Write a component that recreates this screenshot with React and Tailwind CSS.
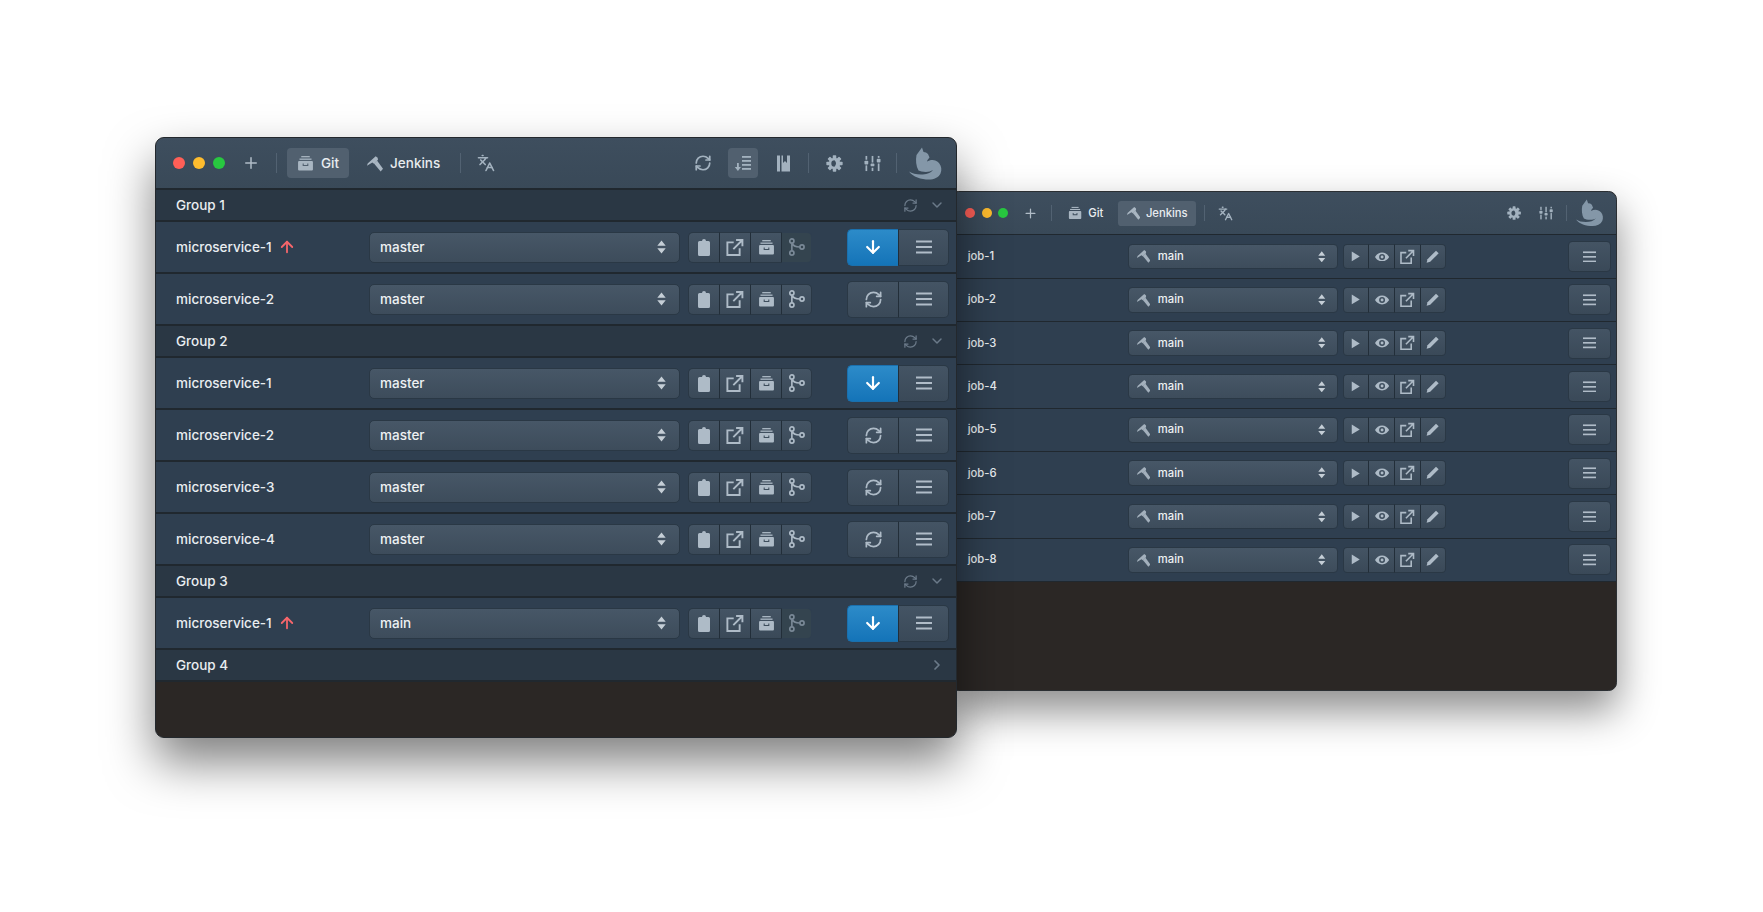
import { Languages, RefreshCw, Plus, ChevronDown, ChevronRight, ArrowUp, ArrowDown } from 'lucide-react';

const ArchiveIcon = ({ className = 'w-[17px] h-[17px]' }) => (
    <svg viewBox="0 0 24 24" className={className} fill="currentColor">
        <rect x="6" y="1.5" width="12" height="1.8" />
        <rect x="3.5" y="5" width="17" height="1.8" />
        <path fillRule="evenodd" d="M3 8.5h18a1.5 1.5 0 0 1 1.5 1.5v10.500a1.5 1.5 0 0 1-1.5 1.500H3a1.500 1.500 0 0 1-1.500-1.500V10A1.500 1.500 0 0 1 3 8.500zM8 12v3.500h8V12h-1.500v2h-5v-2z" />
    </svg>
);

const HammerIcon = ({ className = 'w-[16px] h-[17px]' }) => (
    <svg viewBox="0 0 24 24" className={className} fill="currentColor">
        <path d="M13 1 L1 12 L0 15.500 L8 10.500 L10.500 12.500 L16.500 6.500 L16 3.500 Z" />
        <path d="M10.500 12 L15 7.500 L24 20 L20.500 24 Z" />
    </svg>
);

const SortIcon = () => (
    <svg viewBox="0 0 18 18" className="w-[18px] h-[18px]" fill="currentColor">
        <rect x="8" y="2" width="9" height="1.800" />
        <rect x="8" y="6" width="9" height="1.800" />
        <rect x="8" y="10" width="9" height="1.800" />
        <rect x="8" y="14" width="9" height="1.800" />
        <rect x="3" y="9" width="1.800" height="6" />
        <path d="M0.800 13 H7 L3.900 17 Z" />
    </svg>
);

const BookIcon = () => (
    <svg viewBox="0 0 13 17" className="w-[13px] h-[17px]" fill="currentColor">
        <rect x="0" y="0.500" width="3" height="16" />
        <path d="M4.500 0.500 H6 V8 L8 6 L10 8 V0.500 H13 V16.500 H4.500 Z" />
    </svg>
);

const GearIcon = ({ bg = '#3c4c5b' }) => (
    <svg viewBox="0 0 24 24" className="w-[17px] h-[17px]" fill="currentColor">
        <circle cx="12" cy="12" r="8" />
        {[0, 45, 90, 135].map((a) => (
            <rect key={a} x="9.500" y="0.500" width="5" height="23" rx="1" transform={`rotate(${a} 12 12)`} />
        ))}
        <path d="M12 7.500 A4.500 4.500 0 0 0 12 16.500 A6.500 6.500 0 0 0 12 7.500 Z" fill={bg} />
    </svg>
);

const SlidersIcon = () => (
    <svg viewBox="0 0 18 18" className="w-[17px] h-[17px]" fill="currentColor">
        <rect x="1.600" y="1" width="1.800" height="4" />
        <rect x="0.500" y="6" width="4" height="4" rx="1" />
        <rect x="1.600" y="11" width="1.800" height="6" />
        <rect x="8.100" y="1" width="1.800" height="7" />
        <rect x="7" y="9" width="4" height="3" rx="1" />
        <rect x="8.100" y="13.500" width="1.800" height="3.500" />
        <rect x="14.600" y="1" width="1.800" height="2" />
        <rect x="13.500" y="4" width="4" height="4" rx="1" />
        <rect x="14.600" y="9" width="1.800" height="8" />
    </svg>
);

// the cat sits up with its head at the top and its tail sweeping under the body
const CatIcon = () => (
    <svg viewBox="0 0 33 33" className="w-[33px] h-[33px] text-[#8497a8]" fill="currentColor">
        <path d="M13 0.500 L14.500 5 L17 5.500 L19 7 L20.500 10.500 L18.500 13 L18 14.500 C22 12 27 12.500 30 16 C32.500 19 33 23 31.500 26.500 C29.500 30.500 25 32.500 20 32.500 C12 32.500 4 30 0 24.500 C3 26.500 7 27.500 12 27.500 C17 27.500 21 26.500 24 23 C21 25 17 25.500 12.500 24.500 L9.500 23.500 C7 19 6.500 13 7.500 8 Z" />
    </svg>
);

const ClipboardIcon = () => (
    <svg viewBox="0 0 12 17" className="w-[12px] h-[17px]" fill="currentColor">
        <path d="M4 2 A2 2 0 0 1 8 2 H10.500 A1.500 1.500 0 0 1 12 3.500 V15.500 A1.500 1.500 0 0 1 10.500 17 H1.500 A1.500 1.500 0 0 1 0 15.500 V3.500 A1.500 1.500 0 0 1 1.500 2 Z" />
    </svg>
);

const ExternalIcon = () => (
    <svg viewBox="0 0 24 24" className="w-[19px] h-[19px] -ml-[1px]" fill="none" stroke="currentColor" strokeWidth="2.400">
        <path d="M11 5.500 H3 V21.500 H18.500 V13" />
        <path d="M10.500 14 L21 3.500 M14 2.500 H22 V10.500" />
    </svg>
);

const BranchIcon = () => (
    <svg viewBox="0 0 24 24" className="w-[18px] h-[18px] -ml-[2px]" fill="none" stroke="currentColor" strokeWidth="2.200">
        <circle cx="6.500" cy="4" r="2.800" />
        <circle cx="6.500" cy="20" r="2.800" />
        <circle cx="20" cy="12" r="2.800" />
        <path d="M6.500 7 V17 M7 7 C8 11 12 12 17 12" />
    </svg>
);

const MenuIcon = () => (
    <svg viewBox="0 0 16 14" className="w-[16px] h-[14px]" fill="#b0bcc8">
        <rect x="0" y="0.500" width="16" height="2" />
        <rect x="0" y="6" width="16" height="2" />
        <rect x="0" y="11.500" width="16" height="2" />
    </svg>
);

const PlayIcon = () => (
    <svg viewBox="0 0 12 14" className="w-[11px] h-[13px]" fill="currentColor">
        <path d="M1 0.500 L11.500 7 L1 13.500 Z" />
    </svg>
);

const EyeIcon = () => (
    <svg viewBox="0 0 24 16" className="w-[17px] h-[12px]" fill="currentColor">
        <path fillRule="evenodd" d="M12 0.500 C17.500 0.500 21.500 4 24 8 C21.500 12 17.500 15.500 12 15.500 C6.500 15.500 2.500 12 0 8 C2.500 4 6.500 0.500 12 0.500 Z M12 3 A5 5 0 1 0 12 13 A5 5 0 0 0 12 3 Z M12 5.500 A2.500 2.500 0 1 1 12 10.500 A2.500 2.500 0 0 1 12 5.500 Z" />
    </svg>
);

const PencilIcon = () => (
    <svg viewBox="0 0 16 16" className="w-[16px] h-[16px]" fill="currentColor">
        <path d="M12 0.800 L15.200 4 L5 14.200 L0.800 15.200 L1.800 11 Z" />
    </svg>
);

const UpDownIcon = () => (
    <svg viewBox="0 0 10 16" className="w-[9px] h-[14px] text-[#c5ced6]" fill="currentColor">
        <path d="M5 0.500 L9.800 6.500 H0.200 Z M5 15.500 L0.200 9.500 H9.800 Z" />
    </svg>
);

const Separator = ({ className = '' }) => <div className={`w-px h-[20px] bg-[#526272] ${className}`}></div>;

const TitleTab = ({ active, icon, label, className = '' }) => (
    <div className={`flex items-center gap-[7px] h-[30px] px-[10px] rounded-[4px] text-[13.5px] font-[450] text-[#e8ecef] ${active ? 'bg-[#51606f]' : ''} ${className}`}>
        <span className="text-[#a9b6c2]">{icon}</span>
        <span>{label}</span>
    </div>
);

const TitleCell = ({ children, active, className = '' }) => (
    <div className={`flex items-center justify-center w-[30px] h-[30px] rounded-[4px] text-[#a3b2bf] ${active ? 'bg-[#51606f]' : ''} ${className}`}>
        {children}
    </div>
);

const TitleBar = ({ tab, compact }) => (
    <div className="flex items-center h-[52px] pl-[17px] pr-[14px] border-b-2 border-[#20282f] bg-gradient-to-b from-[#3e4e5e] to-[#394958] shrink-0">
        <div className="flex gap-[8px]">
            <div className="w-[12px] h-[12px] rounded-full bg-[#ff5f57]"></div>
            <div className="w-[12px] h-[12px] rounded-full bg-[#febc2e]"></div>
            <div className="w-[12px] h-[12px] rounded-full bg-[#28c840]"></div>
        </div>
        <Plus className="w-[18px] h-[18px] ml-[17px] text-[#b0bcc7]" />
        <Separator className="ml-[16px]" />
        <TitleTab className="ml-[10px]" active={tab === 'git'} icon={<ArchiveIcon />} label="Git" />
        <TitleTab className="ml-[8px]" active={tab === 'jenkins'} icon={<HammerIcon />} label="Jenkins" />
        <Separator className="ml-[10px]" />
        <Languages className="w-[18px] h-[18px] ml-[16px] text-[#a3b2bf]" strokeWidth={2.2} />
        <div className="flex items-center ml-auto">
            {!compact && (
                <>
                    <TitleCell><RefreshCw className="w-[18px] h-[18px]" strokeWidth={2.300} /></TitleCell>
                    <TitleCell className="ml-[10px]" active><SortIcon /></TitleCell>
                    <TitleCell className="ml-[10px]"><BookIcon /></TitleCell>
                    <Separator className="ml-[10px]" />
                </>
            )}
            <TitleCell className="ml-[10px]"><GearIcon /></TitleCell>
            <TitleCell className="ml-[8px]"><SlidersIcon /></TitleCell>
            <Separator className="ml-[9px]" />
            <div className="ml-[12px]"><CatIcon /></div>
        </div>
    </div>
);

const Select = ({ value, hammer, className = '' }) => (
    <div className={`flex items-center justify-between h-[31px] pl-[10px] pr-[13px] rounded-[5px] border border-[#2a3845] bg-gradient-to-b from-[#475767] to-[#3d4c5b] text-[13.5px] font-[450] text-[#eef1f3] ${className}`}>
        <div className="flex items-center gap-[9px]">
            {hammer && <span className="text-[#a3b0bc]"><HammerIcon /></span>}
            <span>{value}</span>
        </div>
        <UpDownIcon />
    </div>
);

const ToolButtons = ({ children, dimLast }) => {
    const items = children;
    return (
        <div className="flex h-[31px] rounded-[5px] text-[#aebbc7]">
            {items.map((item, i) => {
                const last = i === items.length - 1;
                const dim = last && dimLast;
                return (
                    <div
                        key={i}
                        className={`flex items-center justify-center w-[31px] border-y border-[#2a3845] ${i === 0 ? 'rounded-l-[5px] border-l' : 'border-l border-l-[#222e39]'} ${last ? 'rounded-r-[5px] border-r' : ''} ${dim ? 'bg-[#34444f] !border-[#2f3f50] !border-l-[#222e39] text-[#7a8997]' : 'bg-gradient-to-b from-[#445464] to-[#3a4958]'}`}
                    >
                        {item}
                    </div>
                );
            })}
        </div>
    );
};

const ActionButtons = ({ primary, hideAction }) => (
    <div className="flex h-[37px] ml-auto">
        {!hideAction && (
            <div className={`flex items-center justify-center w-[51px] rounded-l-[5px] border border-r-0 ${primary ? 'border-[#1a70ae] bg-gradient-to-b from-[#2c8bc9] to-[#1474b8] text-white' : 'border-[#2a3845] bg-gradient-to-b from-[#445464] to-[#3a4958] text-[#aebbc7]'}`}>
                {primary ? <ArrowDown className="w-[20px] h-[20px]" strokeWidth={2.600} /> : <RefreshCw className="w-[19px] h-[19px]" strokeWidth={2.200} />}
            </div>
        )}
        <div className={`flex items-center justify-center w-[51px] border border-[#2a3845] bg-gradient-to-b from-[#445464] to-[#3a4958] ${hideAction ? 'rounded-[5px]' : 'rounded-r-[5px] border-l-[#222e39]'}`}>
            <MenuIcon />
        </div>
    </div>
);

const ServiceRow = ({ name, branch = 'master', ahead, primary, branchDisabled }) => (
    <div className="flex items-center h-[52px] pl-[20px] pr-[7px] border-b-2 border-[#20282f] bg-[#2f3f50]">
        <div className="flex items-center gap-[6px] w-[193px] text-[13.5px] font-[450] text-[#e9edf0]">
            <span>{name}</span>
            {ahead && <ArrowUp className="w-[18px] h-[18px] text-[#f7666b]" strokeWidth={2.400} />}
        </div>
        <Select className="w-[311px] mr-[8px]" value={branch} />
        <ToolButtons dimLast={branchDisabled}>
            {[<ClipboardIcon />, <ExternalIcon />, <ArchiveIcon />, <BranchIcon />]}
        </ToolButtons>
        <ActionButtons primary={primary} />
    </div>
);

const JobRow = ({ name }) => (
    <div className="flex items-center h-[52px] pl-[20px] pr-[6px] border-b-2 border-[#20282f] bg-[#2f3f50]">
        <div className="w-[192px] text-[13.5px] font-[450] text-[#e9edf0]">{name}</div>
        <Select className="w-[252px] mr-[6px]" value="main" hammer />
        <ToolButtons>
            {[<PlayIcon />, <EyeIcon />, <ExternalIcon />, <PencilIcon />]}
        </ToolButtons>
        <ActionButtons hideAction />
    </div>
);

const GroupHeader = ({ name, open = true }) => (
    <div className="flex items-center h-[32px] pl-[20px] pr-[11px] border-b-2 border-[#20282f] bg-[#2a3744] text-[13.5px] font-[450] text-[#e9edf0]">
        <span>{name}</span>
        <div className="flex items-center ml-auto text-[#6b7a89]">
            {open ? (
                <>
                    <RefreshCw className="w-[15px] h-[15px] mr-[11px]" strokeWidth={2} />
                    <ChevronDown className="w-[16px] h-[16px]" strokeWidth={2.200} />
                </>
            ) : (
                <ChevronRight className="w-[16px] h-[16px]" strokeWidth={2.600} />
            )}
        </div>
    </div>
);

const jobs = ['job-1', 'job-2', 'job-3', 'job-4', 'job-5', 'job-6', 'job-7', 'job-8'];

const App = () => {
    return (
        <div className="relative w-[1763px] h-[912px] overflow-hidden bg-white font-['Inter','Liberation_Sans',sans-serif]">
            {/* Jenkins window, drawn at a smaller scale behind the Git one */}
            <div className="absolute left-[950px] top-[191px]">
                <div className="[zoom:0.8333]">
                    <div className="flex flex-col w-[800px] h-[600px] rounded-[10px] overflow-hidden border border-[#2b2f33] bg-[#2b2725] shadow-[0_24px_48px_rgba(0,0,0,0.45)]">
                        <TitleBar tab="jenkins" compact />
                        {jobs.map((job) => <JobRow key={job} name={job} />)}
                    </div>
                </div>
            </div>

            {/* Git window */}
            <div className="absolute left-[155px] top-[137px] flex flex-col w-[802px] h-[601px] rounded-[9px] overflow-hidden border border-[#23282d] bg-[#2b2725] shadow-[0_24px_48px_rgba(0,0,0,0.5)]">
                <TitleBar tab="git" />
                <GroupHeader name="Group 1" />
                <ServiceRow name="microservice-1" ahead primary branchDisabled />
                <ServiceRow name="microservice-2" />
                <GroupHeader name="Group 2" />
                <ServiceRow name="microservice-1" primary />
                <ServiceRow name="microservice-2" />
                <ServiceRow name="microservice-3" />
                <ServiceRow name="microservice-4" />
                <GroupHeader name="Group 3" />
                <ServiceRow name="microservice-1" branch="main" ahead primary branchDisabled />
                <GroupHeader name="Group 4" open={false} />
            </div>
        </div>
    );
};

export default App;
